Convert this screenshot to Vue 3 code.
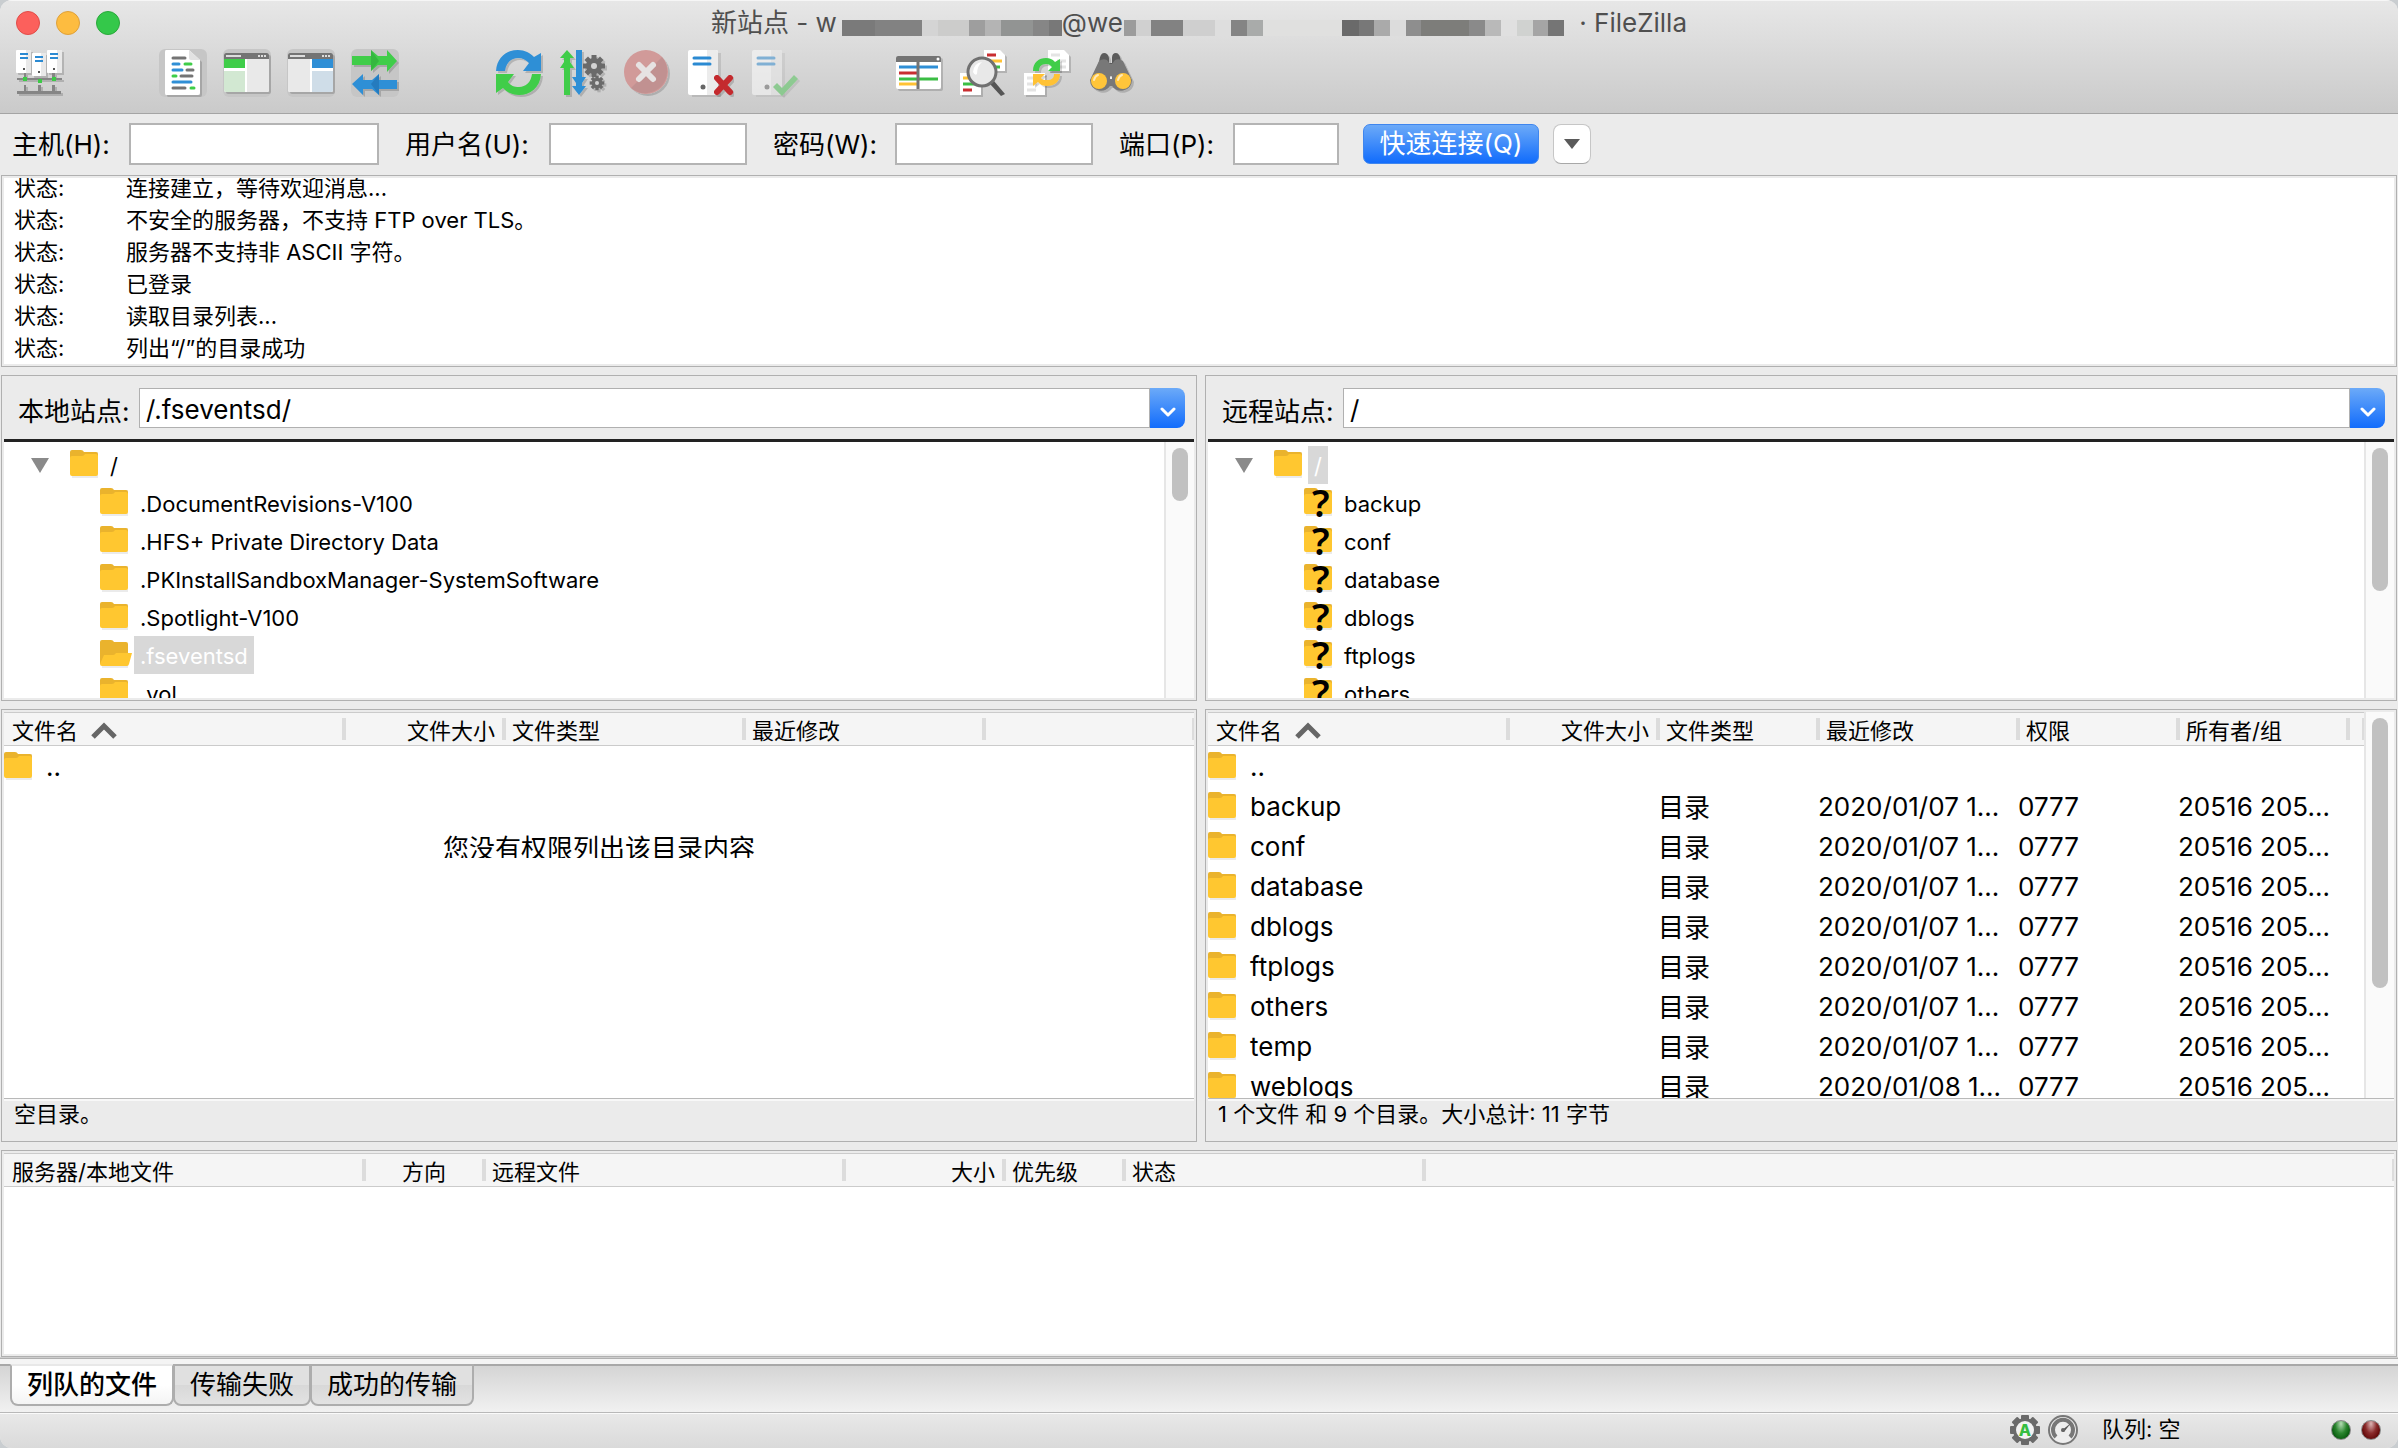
<script setup>
import { ref } from 'vue'

const host = ref('')
const user = ref('')
const pass = ref('')
const port = ref('')
const localPath = ref('/.fseventsd/')
const remotePath = ref('/')

const maskA = [
  [5, 33, '#7a7a7a'], [38, 47, '#828282'], [85, 16, '#d4d4d4'], [101, 31, '#cccccb'],
  [132, 16, '#9e9e9e'], [148, 16, '#b4b4b4'], [164, 32, '#929493'], [196, 16, '#868686'], [212, 13, '#787878']
]
const maskB = [
  [1, 12, '#9c9c9c'], [13, 15, '#d0d0d0'], [28, 32, '#828282'], [60, 32, '#cfcfcf'], [92, 16, '#dedede'],
  [108, 16, '#848484'], [124, 16, '#a9abaa'], [140, 79, '#e0e0df'], [219, 17, '#6a6a6a'], [236, 15, '#787878'],
  [251, 16, '#aaaaaa'], [267, 16, '#dcdcdc'], [283, 15, '#8e8e8e'], [298, 48, '#7d7d7a'], [346, 16, '#8a8a8a'],
  [362, 16, '#b9b9b9'], [378, 16, '#e0e0e0'], [394, 16, '#d0d2d0'], [410, 15, '#a5a5a5'], [425, 16, '#757575']
]

const log = [
  '连接建立，等待欢迎消息...',
  '不安全的服务器，不支持 FTP over TLS。',
  '服务器不支持非 ASCII 字符。',
  '已登录',
  '读取目录列表...',
  '列出“/”的目录成功'
]

const localTree = [
  { name: '.DocumentRevisions-V100' },
  { name: '.HFS+ Private Directory Data' },
  { name: '.PKInstallSandboxManager-SystemSoftware' },
  { name: '.Spotlight-V100' },
  { name: '.fseventsd', open: true },
  { name: '.vol' }
]
const remoteTree = ['backup', 'conf', 'database', 'dblogs', 'ftplogs', 'others']

const remoteFiles = ['backup', 'conf', 'database', 'dblogs', 'ftplogs', 'others', 'temp', 'weblogs'].map((name) => ({
  name,
  type: '目录',
  date: name === 'weblogs' ? '2020/01/08 1...' : '2020/01/07 1...',
  perm: '0777',
  owner: '20516 205...'
}))

const tabs = ['列队的文件', '传输失败', '成功的传输']
const activeTab = ref(0)
</script>

<template>
  <div class="window">
    <svg class="defs" aria-hidden="true">
      <defs>
        <filter id="drop" x="-20%" y="-20%" width="150%" height="150%">
          <feDropShadow dx="2" dy="2" stdDeviation="0.6" flood-color="#000" flood-opacity="0.16" />
        </filter>
        <symbol id="folder" viewBox="0 0 32 28">
          <path d="M2 2h26v26H2z" fill="#000" opacity=".08" />
          <path d="M0 2Q0 0 2 0h9q2 0 3 2h12q2 0 2 2v20H0z" fill="#eab32d" />
          <path d="M0 8q0-2 2-2h10q2 0 3-2h11q2 0 2 2v18q0 2-2 2H2q-2 0-2-2z" fill="#ffc730" />
        </symbol>
        <symbol id="folder-open" viewBox="0 0 32 28">
          <path d="M2 4h26v24H2z" fill="#000" opacity=".08" />
          <path d="M0 2Q0 0 2 0h9q2 0 3 2h12q2 0 2 2v20H0z" fill="#eab32d" />
          <path d="M4 15h9q2 0 3-2h16l-3 11q-.5 2-2 2H2q-2 0-2-2z" fill="#ffc730" />
        </symbol>
        <symbol id="gear" viewBox="-12 -12 24 24">
          <g fill="#6b6b6b">
            <rect v-for="a in [0, 45, 90, 135]" :key="a" x="-2.5" y="-11" width="5" height="22" :transform="`rotate(${a})`" />
            <circle r="8" />
          </g>
          <circle r="3" fill="#d2d2d2" />
        </symbol>
        <symbol id="server" viewBox="0 0 48 48">
          <path d="M5 4h29v44H5z" fill="#000" opacity=".1" />
          <rect x="1" y="1" width="30" height="45" rx="2" fill="#fff" />
          <path d="M20 1h9q2 0 2 2v41q0 2-2 2h-9z" fill="#ececec" />
          <path d="M7 9h16M7 15h16" stroke="#2b8ad2" stroke-width="3" stroke-linecap="round" />
          <circle cx="16" cy="38" r="2.5" fill="#666" />
        </symbol>
      </defs>
    </svg>

    <header class="chrome">
      <div class="titlebar">
        <div class="lights">
          <button class="light red" aria-label="关闭"></button>
          <button class="light amber" aria-label="最小化"></button>
          <button class="light green" aria-label="缩放"></button>
        </div>
        <h1 class="title">
          <span>新站点 - w</span>
          <svg width="225" height="16" viewBox="0 0 225 16"><rect v-for="b in maskA" :key="b[0]" :x="b[0]" :width="b[1]" height="16" :fill="b[2]" /></svg>
          <span>@we</span>
          <svg width="449" height="16" viewBox="0 0 449 16"><rect v-for="b in maskB" :key="b[0]" :x="b[0]" :width="b[1]" height="16" :fill="b[2]" /></svg>
          <span> · FileZilla</span>
        </h1>
      </div>

      <div class="toolbar">
        <div class="group">
          <button class="tool" aria-label="站点管理器">
            <svg viewBox="0 0 48 48">
              <g filter="url(#drop)">
                <path d="M2 29h45v2H2zM2 42h44v3H2zM9 36h2v7H9zM23 36h3v7h-3zM37 36h3v7h-3zM9 23h2v7H9zM37 23h3v7h-3z" fill="#858585" />
                <rect x="1" y="1" width="15" height="23" rx="1" fill="#fff" />
                <rect x="32" y="1" width="15" height="23" rx="1" fill="#fff" />
                <rect x="17" y="4" width="14" height="23" rx="1" fill="#fff" />
                <path d="M11 1h5v23h-5zM42 1h5v23h-5zM26 4h5v23h-5z" fill="#e9e9e9" />
              </g>
              <path d="M5 5h8M5 9h8M35 5h8M35 9h8M20 8h8M20 12h8" stroke="#2b8ad2" stroke-width="2" />
              <path d="M8 19h2v2H8zM38 19h2v2h-2zM23 22h2v2h-2z" fill="#555" />
              <path d="M8 28h4v4H8zM37 28h4v4h-4zM23 30h4v4h-4z" fill="#3ccb46" />
            </svg>
          </button>
        </div>
        <div class="group">
          <button class="tool on" aria-label="消息日志">
            <svg viewBox="0 0 48 48">
              <path d="M7 1h23l11 10v33q0 2-2 2H7q-1 0-1-2V3q0-2 1-2z" fill="#fff" filter="url(#drop)" />
              <path d="M30 1v8q0 2 2 2h9z" fill="#e2e2e2" />
              <g stroke-width="3" stroke-linecap="round">
                <path d="M14 9h12M28 21h6M22 27h11M14 39h12" stroke="#747474" />
                <path d="M14 15h6M14 21h9M14 33h18" stroke="#2f8fd6" />
                <path d="M26 15h6M14 27h3M32 39h3" stroke="#3fcd49" />
              </g>
            </svg>
          </button>
          <button class="tool on" aria-label="本地目录树">
            <svg viewBox="0 0 48 48">
              <rect x="1" y="4" width="45" height="39" rx="2" fill="#fff" filter="url(#drop)" />
              <path d="M1 10V6q0-2 2-2h41q2 0 2 2v4z" fill="#747474" />
              <path d="M3 7h15" stroke="#ddd" stroke-width="2" />
              <path d="M35 7h9" stroke="#ddd" stroke-width="2" stroke-dasharray="2 1" />
              <path d="M1 10h21v9H1z" fill="#3fcd49" />
              <path d="M1 22h21v21H3q-2 0-2-2z" fill="#d2e8d2" />
              <path d="M24 10h22v31q0 2-2 2H24z" fill="#e9e9e9" />
            </svg>
          </button>
          <button class="tool on" aria-label="远程目录树">
            <svg viewBox="0 0 48 48">
              <rect x="1" y="4" width="45" height="39" rx="2" fill="#fff" filter="url(#drop)" />
              <path d="M1 10V6q0-2 2-2h41q2 0 2 2v4z" fill="#747474" />
              <path d="M3 7h15" stroke="#ddd" stroke-width="2" />
              <path d="M35 7h9" stroke="#ddd" stroke-width="2" stroke-dasharray="2 1" />
              <path d="M25 10h21v9H25z" fill="#2f8fd6" />
              <path d="M25 22h21v19q0 2-2 2H25z" fill="#cfdde8" />
              <path d="M1 10h22v33H3q-2 0-2-2z" fill="#e9e9e9" />
            </svg>
          </button>
          <button class="tool on" aria-label="传输队列">
            <svg viewBox="0 0 48 48">
              <g filter="url(#drop)">
                <path d="M1 7h19V1l7 6h9V1l10 11-10 11v-7h-9l-7 6v-6H1z" fill="#3fcd49" />
                <path d="M46 31H28v-6l-7 6h-9v-6L1 35l11 11v-6h9l7 6v-6h18z" fill="#2f8fd6" />
              </g>
              <path d="M20 1l8 11-8 10z" fill="#2fa83a" opacity=".6" />
              <path d="M28 25l-8 10 8 11z" fill="#1f6eae" opacity=".6" />
            </svg>
          </button>
        </div>
        <div class="group">
          <button class="tool" aria-label="刷新">
            <svg viewBox="0 0 48 48">
              <g filter="url(#drop)">
                <path d="M1 22C2 8 12 1 23 1c7 0 12 3 16 7l7-4v18H28l6-8c-3-3-6-5-11-5-7 0-12 5-13 13z" fill="#2f8fd6" />
                <path d="M46 25c-1 14-11 21-22 21-7 0-12-3-16-7l-7 5V25h18l-6 8c3 4 6 5 11 5 7 0 12-5 13-13z" fill="#3fcd49" />
              </g>
            </svg>
          </button>
          <button class="tool" aria-label="处理队列">
            <svg viewBox="0 0 48 48">
              <g filter="url(#drop)">
                <path d="M5 46V19H1l4-6V9H1l7-8 7 8h-4v4l4 6h-4v27z" fill="#3fcd49" />
                <path d="M17 1h6v27h4l-4 6v3h4l-7 9-7-9h4v-3l-4-6h4z" fill="#2f8fd6" />
                <use href="#gear" x="23" y="5" width="24" height="24" />
                <use href="#gear" x="30" y="26" width="16" height="16" />
              </g>
            </svg>
          </button>
          <button class="tool" disabled aria-label="取消当前操作">
            <svg viewBox="0 0 48 48">
              <circle cx="23" cy="23" r="22" fill="#d19a99" filter="url(#drop)" />
              <path d="M39 8A22 22 0 0 1 8 39z" fill="#bd8f8f" opacity=".8" />
              <path d="M16 16l14 14M30 16L16 30" stroke="#e6e2e2" stroke-width="6" stroke-linecap="round" />
            </svg>
          </button>
          <button class="tool" aria-label="断开连接">
            <svg viewBox="0 0 48 48">
              <use href="#server" width="48" height="48" />
              <path d="M30 29l13 14M43 29L30 43" stroke="#c42c2f" stroke-width="6" stroke-linecap="round" filter="url(#drop)" />
            </svg>
          </button>
          <button class="tool" disabled aria-label="重新连接">
            <svg viewBox="0 0 48 48" opacity=".5">
              <use href="#server" width="48" height="48" />
              <path d="M22 38l4-4 5 5L43 26l4 4-16 17z" fill="#4cc452" filter="url(#drop)" />
            </svg>
          </button>
        </div>
        <div class="group">
          <button class="tool" aria-label="目录列表过滤器">
            <svg viewBox="0 0 48 48">
              <rect x="1" y="7" width="45" height="33" rx="2" fill="#fff" filter="url(#drop)" />
              <path d="M1 13V9q0-2 2-2h41q2 0 2 2v4z" fill="#747474" />
              <circle cx="43" cy="10" r="1.5" fill="#fff" />
              <g stroke-width="3">
                <path d="M4 18h39" stroke="#2f8fd6" /><path d="M4 24h18" stroke="#c92d30" />
                <path d="M4 30h39" stroke="#3bbd44" /><path d="M4 35h18" stroke="#ffc234" />
                <path d="M23 13v27" stroke="#747474" />
              </g>
            </svg>
          </button>
          <button class="tool" aria-label="目录对比">
            <svg viewBox="0 0 48 48">
              <g filter="url(#drop)">
                <path d="M25 1h16l5 5v16H25z" fill="#fff" /><path d="M1 24h21v22H1z" fill="#fff" />
              </g>
              <g stroke-width="3">
                <path d="M28 6h9M4 41h9" stroke="#c92d30" /><path d="M30 12h13M4 29h8" stroke="#ffc234" />
                <path d="M36 18h5M4 35h14" stroke="#3bbd44" />
              </g>
              <path d="M35 32l11 13-4 2-11-12z" fill="#555" />
              <circle cx="23" cy="23" r="14" fill="#e8e8e8" stroke="#707070" stroke-width="3" />
              <path d="M14 23q1-9 9-10q-5 4-5 12q-2 2-4-2z" fill="#fff" />
            </svg>
          </button>
          <button class="tool" aria-label="同步浏览">
            <svg viewBox="0 0 48 48">
              <g filter="url(#drop)">
                <path d="M25 1h16l5 5v16H25z" fill="#fff" /><path d="M1 24h21v22H1z" fill="#fff" />
              </g>
              <path d="M28 6h9M34 12h9M36 18h7M4 29h8M4 35h10M4 41h9" stroke="#e4e4e4" stroke-width="3" />
              <g filter="url(#drop)">
                <path d="M10 22C10 13 16 9 23 9c4 0 6 1 9 4l5-3v12H25l4-4c-2-2-3-3-6-3-5 0-7 3-7 7z" fill="#3fcd49" />
                <path d="M37 25c0 8-6 12-13 12-4 0-6-1-9-4l-5 4V25h12l-4 4c2 2 3 2 6 2 5 0 7-2 7-6z" fill="#ffc234" />
              </g>
            </svg>
          </button>
          <button class="tool" aria-label="查找文件">
            <svg viewBox="0 0 48 48">
              <g filter="url(#drop)">
                <path d="M12 13q1-9 5-9t5 5v5h3V9q0-5 4-5t5 9l3 5-27 0z" fill="#5b5b5b" />
                <path d="M12 12q4-3 8-1l3 4h2l3-4q4-2 8 1l9 19a11 11 0 0 1-20 6h-2A11 11 0 0 1 3 31z" fill="#787878" />
              </g>
              <path d="M23 28q1-2 2 0v2h-2z" fill="#eee" />
              <circle cx="12" cy="32" r="8" fill="#ffc53a" /><circle cx="36" cy="32" r="8" fill="#ffc53a" />
              <path d="M7 31q1-4 4-5M31 31q1-4 4-5" fill="none" stroke="#ffe9b8" stroke-width="2" stroke-linecap="round" />
            </svg>
          </button>
        </div>
      </div>
    </header>

    <form class="quick" @submit.prevent>
      <div class="field"><label class="w-host" for="host">主机(H):</label><input id="host" v-model="host" class="in-host" type="text" /></div>
      <div class="field"><label class="w-user" for="user">用户名(U):</label><input id="user" v-model="user" class="in-user" type="text" /></div>
      <div class="field"><label class="w-pass" for="pass">密码(W):</label><input id="pass" v-model="pass" class="in-user" type="password" /></div>
      <div class="field"><label class="w-port" for="port">端口(P):</label><input id="port" v-model="port" class="in-port" type="text" /></div>
      <button class="connect" type="submit">快速连接(Q)</button>
      <button class="history" type="button" aria-label="历史">
        <svg width="16" height="10" viewBox="0 0 16 10"><path d="M0 0h16L8 10z" fill="#5a5a5a" /></svg>
      </button>
    </form>

    <main class="work">
      <section class="pane log">
        <div class="log-body">
          <p v-for="line in log" :key="line"><b>状态:</b><span>{{ line }}</span></p>
        </div>
      </section>

      <div class="split">
        <section class="pane site">
          <div class="path">
            <label for="local-path">本地站点:</label>
            <div class="combo">
              <input id="local-path" v-model="localPath" type="text" />
              <button aria-label="打开列表"><svg width="16" height="10" viewBox="0 0 16 10"><path d="M2 2l6 6 6-6" fill="none" stroke="#fff" stroke-width="3" stroke-linecap="round" stroke-linejoin="round" /></svg></button>
            </div>
          </div>
          <div class="tree">
            <ul>
              <li class="root">
                <svg class="twist" width="18" height="15" viewBox="0 0 18 15"><path d="M0 0h18L9 15z" fill="#8a8a8a" /></svg>
                <span class="icon"><svg width="32" height="28"><use href="#folder" /></svg></span><span class="name">/</span>
              </li>
              <li v-for="n in localTree" :key="n.name">
                <span class="icon"><svg width="32" height="28"><use :href="n.open ? '#folder-open' : '#folder'" /></svg></span>
                <span class="name" :class="{ selected: n.open }">{{ n.name }}</span>
              </li>
            </ul>
            <div class="scroll"><div class="thumb small"></div></div>
          </div>
        </section>
        <section class="pane site">
          <div class="path">
            <label for="remote-path">远程站点:</label>
            <div class="combo">
              <input id="remote-path" v-model="remotePath" type="text" />
              <button aria-label="打开列表"><svg width="16" height="10" viewBox="0 0 16 10"><path d="M2 2l6 6 6-6" fill="none" stroke="#fff" stroke-width="3" stroke-linecap="round" stroke-linejoin="round" /></svg></button>
            </div>
          </div>
          <div class="tree">
            <ul>
              <li class="root">
                <svg class="twist" width="18" height="15" viewBox="0 0 18 15"><path d="M0 0h18L9 15z" fill="#8a8a8a" /></svg>
                <span class="icon"><svg width="32" height="28"><use href="#folder" /></svg></span><span class="name selected">/</span>
              </li>
              <li v-for="n in remoteTree" :key="n">
                <span class="icon"><svg width="32" height="28"><use href="#folder" /></svg><i class="unknown">?</i></span>
                <span class="name">{{ n }}</span>
              </li>
            </ul>
            <div class="scroll"><div class="thumb medium"></div></div>
          </div>
        </section>
      </div>

      <div class="split">
        <section class="pane list">
          <div class="list-row">
            <div class="list-body">
              <table>
                <colgroup><col class="c340" /><col class="c160" /><col class="c240" /><col class="c240" /><col /></colgroup>
                <thead>
                  <tr>
                    <th>文件名<svg class="sort" width="26" height="17" viewBox="0 0 26 17"><path d="M2 15L13 4l11 11" fill="none" stroke="#666" stroke-width="5" /></svg></th>
                    <th class="num">文件大小</th><th>文件类型</th><th>最近修改</th><th></th>
                  </tr>
                </thead>
                <tbody>
                  <tr><td colspan="5"><span class="file"><svg width="32" height="28"><use href="#folder" /></svg>..</span></td></tr>
                </tbody>
              </table>
              <p class="denied">您没有权限列出该目录内容</p>
            </div>
          </div>
          <div class="summary">空目录。</div>
        </section>
        <section class="pane list">
          <div class="list-row">
            <div class="list-body">
              <table>
                <colgroup><col class="c300" /><col class="c150" /><col class="c160" /><col class="c200" /><col class="c160" /><col class="c170" /><col /></colgroup>
                <thead>
                  <tr>
                    <th>文件名<svg class="sort" width="26" height="17" viewBox="0 0 26 17"><path d="M2 15L13 4l11 11" fill="none" stroke="#666" stroke-width="5" /></svg></th>
                    <th class="num">文件大小</th><th>文件类型</th><th>最近修改</th><th>权限</th><th>所有者/组</th><th></th>
                  </tr>
                </thead>
                <tbody>
                  <tr><td colspan="7"><span class="file"><svg width="32" height="28"><use href="#folder" /></svg>..</span></td></tr>
                  <tr v-for="f in remoteFiles" :key="f.name">
                    <td><span class="file"><svg width="32" height="28"><use href="#folder" /></svg>{{ f.name }}</span></td>
                    <td></td><td class="type">{{ f.type }}</td><td class="text">{{ f.date }}</td><td class="text">{{ f.perm }}</td><td class="text">{{ f.owner }}</td><td></td>
                  </tr>
                </tbody>
              </table>
            </div>
            <div class="scroll"><div class="thumb large"></div></div>
          </div>
          <div class="summary">1 个文件 和 9 个目录。大小总计: 11 字节</div>
        </section>
      </div>

      <section class="pane queue">
        <div class="list-body">
          <table>
            <colgroup><col class="c360" /><col class="c120" /><col class="c360" /><col class="c160" /><col class="c120" /><col class="c300" /><col /></colgroup>
            <thead>
              <tr>
                <th>服务器/本地文件</th><th class="mid">方向</th><th>远程文件</th><th class="num">大小</th><th>优先级</th><th>状态</th><th></th>
              </tr>
            </thead>
          </table>
        </div>
      </section>
    </main>

    <nav class="tabs">
      <button v-for="(t, i) in tabs" :key="t" :class="{ active: i === activeTab }" @click="activeTab = i">{{ t }}</button>
    </nav>

    <footer class="status">
      <svg class="badge" width="30" height="30" viewBox="-15 -15 30 30">
        <g fill="#6a6a6a">
          <rect v-for="a in [0, 45, 90, 135]" :key="a" x="-4" y="-15" width="8" height="30" rx="1" :transform="`rotate(${a})`" />
          <circle r="12" />
        </g>
        <circle r="9" fill="#f2f2f2" />
        <text y="6" text-anchor="middle" class="auto">A</text>
      </svg>
      <svg class="badge" width="30" height="30" viewBox="-15 -15 30 30">
        <circle r="14" fill="#eee" stroke="#777" stroke-width="2" />
        <path d="M-7 7A10 10 0 1 1 7 7" fill="none" stroke="#777" stroke-width="4" />
        <path d="M-2 1L8-7L1 2z" fill="#555" /><circle r="2" fill="#666" />
      </svg>
      <span class="queue-state">队列: 空</span>
      <span class="led ok"></span>
      <span class="led busy"></span>
    </footer>
  </div>
</template>

<style>
body { margin: 0; background: #c9cdd0; }
</style>

<style scoped>
.window {
  box-sizing: border-box; height: 100vh; display: flex; flex-direction: column; overflow: hidden;
  border-radius: 12px; background: #ebebeb; color: #000;
  font-family: Inter, "Noto Sans CJK SC", sans-serif; font-size: 26px;
}
.window *, .window *::after { box-sizing: border-box; }
.defs { position: absolute; width: 0; height: 0; }
button, input { font: inherit; color: inherit; margin: 0; padding: 0; border: 0; }
ul, p, h1 { margin: 0; padding: 0; list-style: none; font-weight: 400; }

.chrome { background: linear-gradient(#e7e7e7, #cacaca); border-top: 1px solid #f6f6f6; border-bottom: 1px solid #a4a4a4; padding-bottom: 16px; }
.titlebar { display: grid; grid-template-columns: 1fr auto 1fr; align-items: center; height: 44px; margin-bottom: 4px; }
.lights { display: flex; gap: 16px; padding-left: 16px; }
.light { width: 24px; height: 24px; border-radius: 50%; }
.light.red { background: #fc605c; border: 1px solid #e04c48; }
.light.amber { background: #fdbc40; border: 1px solid #dea03a; }
.light.green { background: #34c84a; border: 1px solid #2aa83b; }
.title { display: flex; align-items: center; font-size: 26px; line-height: 40px; color: #4f4f4f; white-space: pre; }
.title svg { margin-top: 10px; }

.toolbar { display: flex; gap: 96px; padding-left: 15px; }
.group { display: flex; gap: 16px; }
.tool { width: 48px; height: 48px; background: none; border-radius: 6px; }
.tool svg { display: block; width: 48px; height: 48px; overflow: visible; }
.tool.on { background: #c6c6c6; }

.quick { display: flex; align-items: center; padding: 9px 16px 10px 12px; }
.field { display: flex; align-items: center; margin-right: 26px; }
.field:nth-child(4) { margin-right: 24px; }
.field label { padding-bottom: 4px; }
.field input { height: 42px; background: #fff; border: 2px solid #b4b4b4; padding: 0 6px; min-width: 0; }
.w-host { width: 117px; } .w-user { width: 144px; } .w-pass { width: 122px; } .w-port { width: 114px; }
.in-host { width: 250px; } .in-user { width: 198px; } .in-port { width: 106px; }
.connect { width: 176px; height: 40px; border-radius: 7px; color: #fff; background: linear-gradient(#6caaf8, #116cfc); border: 1px solid #3f86ee; line-height: 36px; }
.history { width: 38px; height: 40px; margin-left: 14px; border-radius: 8px; background: #fff; border: 1px solid #c6c6c6; border-bottom-color: #a8a8a8; display: flex; align-items: center; justify-content: center; }

.work { flex: 1; min-height: 0; display: grid; grid-template-rows: minmax(0, 192fr) minmax(0, 326fr) minmax(0, 433fr) minmax(0, 207fr); gap: 8px; padding: 0 1px; }
.split { display: grid; grid-template-columns: minmax(0, 1196fr) minmax(0, 1192fr); gap: 8px; min-height: 0; }
.pane { border: 1px solid #b0b0b0; padding: 2px; min-height: 0; min-width: 0; display: flex; flex-direction: column; }

.log-body { flex: 1; min-height: 0; overflow: hidden; background: #fff; display: flex; flex-direction: column; justify-content: flex-end; font-size: 22px; line-height: 32px; padding-left: 10px; }
.log-body p { display: flex; white-space: pre; }
.log-body b { width: 112px; font-weight: 400; }

.path { flex: none; display: flex; align-items: center; height: 64px; padding: 0 9px 2px 14px; border-bottom: 3px solid #222; }
.path label { width: 121px; padding-top: 3px; }
.combo { flex: 1; display: flex; height: 40px; }
.combo input { flex: 1; min-width: 0; border: 1px solid #b0b0b0; background: #fff; padding: 4px 6px 0; }
.combo button { width: 35px; border-radius: 0 8px 8px 0; background: linear-gradient(#6caaf8, #116cfc); }
.tree { flex: 1; min-height: 0; display: flex; background: #fff; overflow: hidden; }
.tree ul { flex: 1; padding-top: 4px; font-size: 22px; line-height: 40px; }
.tree li { display: flex; height: 38px; padding-left: 96px; align-items: flex-start; }
.tree li.root { padding-left: 27px; }
.twist { margin: 12px 21px 0 0; }
.icon { position: relative; height: 38px; width: 34px; padding-top: 4px; }
.icon svg { display: block; }
.unknown { position: absolute; left: 8px; top: 0; font-style: normal; font-size: 38px; font-weight: 600; line-height: 36px; font-family: "Noto Sans", sans-serif; }
.name { height: 38px; padding: 0 6px; }
.selected { background: #d8d8d8; color: #fff; }

.scroll { flex: none; width: 30px; background: #fafafa; border-left: 2px solid #e6e6e6; padding: 6px 5px 0 6px; }
.thumb { width: 16px; border-radius: 8px; background: #c1c1c1; }
.small { height: 21%; } .medium { height: 57%; } .large { height: 71%; }

.list-row { flex: 1; min-height: 0; display: flex; }
.list-body { flex: 1; min-width: 0; min-height: 0; overflow: hidden; background: #fff; }
table { width: 100%; table-layout: fixed; border-collapse: separate; border-spacing: 0; }
th { position: relative; height: 34px; padding: 3px 8px 0; font-size: 22px; line-height: 28px; font-weight: 400; text-align: left; background: #f5f5f5; border-top: 1px solid #cbcbcb; border-bottom: 1px solid #cbcbcb; white-space: nowrap; }
th::after { content: ""; position: absolute; right: -2px; top: 5px; width: 4px; height: 22px; background: #dcdcdc; z-index: 1; }
th:last-child::after { right: 0; width: 2px; }
.num { text-align: right; padding-right: 9px; } .mid { text-align: center; }
.sort { margin-left: 13px; }
td { height: 40px; padding: 0; line-height: 36px; white-space: nowrap; overflow: hidden; }
td.text { padding-top: 2px; }
td.type { padding-top: 4px; }
.file { display: flex; height: 40px; line-height: 42px; }
.file svg { margin: 6px 10px 0 0; }
.c120 { width: 120px; } .c150 { width: 150px; } .c160 { width: 160px; } .c170 { width: 170px; } .c200 { width: 200px; }
.c240 { width: 240px; } .c300 { width: 300px; } .c340 { width: 340px; } .c360 { width: 360px; }
.denied { margin-top: 46px; height: 26px; line-height: 34px; overflow: hidden; text-align: center; }
.summary { flex: none; height: 41px; border-top: 1px solid #b8b8b8; box-shadow: inset 0 2px #f8f8f8; padding-left: 10px; font-size: 22px; line-height: 30px; }

.tabs { flex: none; display: flex; align-items: flex-start; height: 56px; padding: 0 10px; background: linear-gradient(#b0b0b0, #b0b0b0) 0 1px / 100% 1px no-repeat, linear-gradient(#f4f4f4, #f4f4f4) 0 2px / 100% 5px no-repeat, linear-gradient(#a8a8a8, #a8a8a8) 0 7px / 100% 2px no-repeat, linear-gradient(#cfcfcf, #f1f1f1); border-bottom: 1px solid #b8b8b8; }
.tabs button { margin: 7px -1px 0 0; height: 42px; padding: 0 15px; border: 2px solid #adadad; border-radius: 0 0 8px 8px; background: linear-gradient(#e0e0e0 50%, #d8d8d8 50%, #e2e2e2); line-height: 36px; }
.tabs button.active { background: linear-gradient(#fff 50%, #f4f4f4); border-top-color: #e8e8e8; font-weight: 500; }
.status { flex: none; height: 35px; display: flex; align-items: center; padding: 0 7px 2px 0; background: linear-gradient(#e8e8e8, #dadada); border-top: 1px solid #fafafa; font-size: 22px; }
.badge { margin-right: 8px; }
.badge:first-child { margin-left: auto; }
.auto { font-size: 16px; font-weight: 800; fill: #36bd40; }
.queue-state { width: 245px; padding: 0 0 2px 16px; line-height: 28px; }
.led { width: 20px; height: 20px; border-radius: 50%; margin-right: 10px; border: 1px solid #888; }
.led.ok { background: radial-gradient(ellipse at 50% 15%, #b4dcb4 0, #2b852f 45%, #0a5d10 75%); }
.led.busy { background: radial-gradient(ellipse at 50% 15%, #dcb4b4 0, #8a2b2b 45%, #640a0a 75%); }
</style>
